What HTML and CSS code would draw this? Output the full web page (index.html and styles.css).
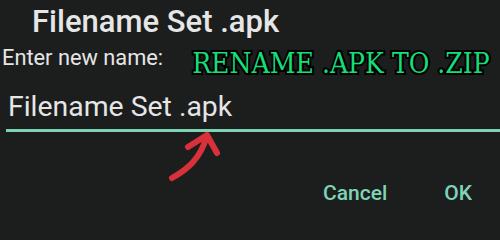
FILE: index.html
```html
<!DOCTYPE html>
<html>
<head>
<meta charset="utf-8">
<link rel="stylesheet" href="styles.css">
</head>
<body>
<div class="dialog">
  <div class="title">Filename Set .apk</div>
  <div class="prompt-row">
    <span class="label">Enter new name:</span>
    <span class="promo">RENAME .APK TO .ZIP</span>
  </div>
  <div class="field">Filename Set .apk</div>
  <div class="actions">
    <span class="btn">Cancel</span>
    <span class="btn">OK</span>
  </div>
  <svg class="arrow" width="60" height="60" viewBox="0 0 60 60">
    <path d="M8 49 C 24 40, 36 30, 43 7" fill="none" stroke="#d8313a" stroke-width="6" stroke-linecap="round"/>
    <path d="M24 18 L43 6 L53 24" fill="none" stroke="#d8313a" stroke-width="6" stroke-linecap="round" stroke-linejoin="round"/>
  </svg>
</div>
</body>
</html>
```

FILE: styles.css
```css
html, body {
  margin: 0;
  padding: 0;
  background: #1c1e1e;
}
.dialog {
  position: relative;
  width: 500px;
  height: 211px;
  overflow: hidden;
  font-family: Roboto, "Noto Sans", sans-serif;
  color: #e6e6e6;
  white-space: nowrap;
}
.title {
  padding-left: 32px;
  padding-top: 4px;
  font-size: 31px;
  font-weight: 500;
  line-height: 36px;
  height: 36px;
}
.prompt-row {
  display: flex;
  align-items: flex-start;
  padding-left: 2px;
  height: 48px;
}
.label {
  margin-top: 5px;
  font-size: 21.8px;
  line-height: 26px;
}
.promo {
  margin-left: 29px;
  margin-top: 8px;
  font-family: "DejaVu Serif Condensed", "DejaVu Serif", serif;
  font-stretch: condensed;
  font-size: 28px;
  line-height: 32px;
  color: #14de78;
  -webkit-text-stroke: 4px #000;
  paint-order: stroke fill;
}
.field {
  margin-left: 6px;
  padding-left: 2px;
  padding-top: 2px;
  padding-bottom: 5px;
  font-size: 28.4px;
  line-height: 34px;
  border-bottom: 3px solid #7ed3b5;
}
.actions {
  display: flex;
  justify-content: flex-end;
  gap: 57px;
  padding-right: 28px;
  padding-top: 49px;
}
.btn {
  font-size: 21px;
  font-weight: 500;
  color: #7fd3b6;
  line-height: 24px;
}
.arrow {
  position: absolute;
  left: 164px;
  top: 129px;
}
```
